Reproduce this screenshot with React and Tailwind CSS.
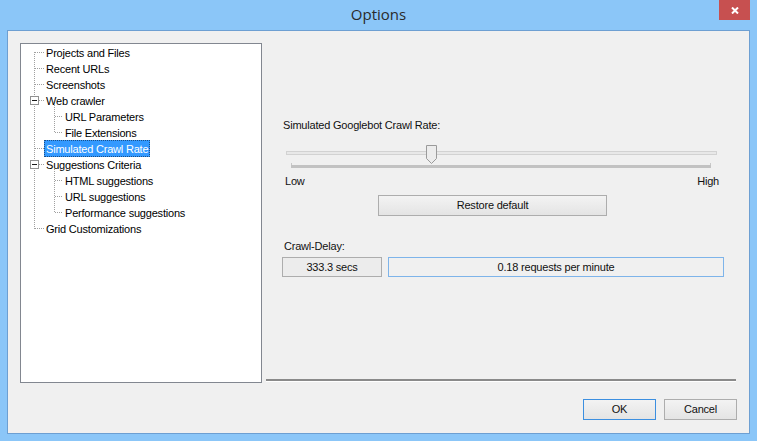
const treeItems = [
  { label: "Projects and Files", level: 0 },
  { label: "Recent URLs", level: 0 },
  { label: "Screenshots", level: 0 },
  { label: "Web crawler", level: 0 },
  { label: "URL Parameters", level: 1 },
  { label: "File Extensions", level: 1 },
  { label: "Simulated Crawl Rate", level: 0, selected: true },
  { label: "Suggestions Criteria", level: 0 },
  { label: "HTML suggestions", level: 1 },
  { label: "URL suggestions", level: 1 },
  { label: "Performance suggestions", level: 1 },
  { label: "Grid Customizations", level: 0 },
];

const mid = (i) => 8 + 16 * i;

function TreeLines() {
  const dot = { stroke: "#a0a0a0", strokeDasharray: "1 1", shapeRendering: "crispEdges" };
  return (
    <svg className="absolute left-0 top-0 pointer-events-none" width="240" height="200">
      {/* level 0 trunk */}
      <line x1="13.5" y1={mid(0)} x2="13.5" y2={mid(11) + 1} style={dot} />
      {treeItems.map((it, i) =>
        it.level === 0 ? (
          <line key={i} x1="14" y1={mid(i) + 0.5} x2="23" y2={mid(i) + 0.5} style={dot} />
        ) : (
          <line key={i} x1="34" y1={mid(i) + 0.5} x2="42" y2={mid(i) + 0.5} style={dot} />
        )
      )}
      {/* level 1 branches */}
      <line x1="33.5" y1={mid(3) + 5} x2="33.5" y2={mid(5) + 1} style={dot} />
      <line x1="33.5" y1={mid(7) + 5} x2="33.5" y2={mid(10) + 1} style={dot} />
      {/* expand boxes */}
      {[3, 7].map((i) => (
        <g key={i} shapeRendering="crispEdges">
          <rect x="9.5" y={mid(i) - 3.5} width="8" height="8" fill="#fff" stroke="#919191" />
          <line x1="11" y1={mid(i) + 0.5} x2="16" y2={mid(i) + 0.5} stroke="#1a1a1a" />
        </g>
      ))}
    </svg>
  );
}

function Btn({ children, className = "" }) {
  return (
    <div
      className={`flex items-center justify-center h-[21px] border bg-linear-to-b from-[#f3f3f3] to-[#e4e4e4] text-[11px] text-[#111] ${className}`}
    >
      {children}
    </div>
  );
}

export default function App() {
  return (
    <div className="w-[757px] h-[441px] bg-[#8bc6f8] flex flex-col font-['Liberation_Sans',Arial,sans-serif] tracking-[-0.2px] text-[#111] overflow-hidden">
      {/* Title bar */}
      <div className="h-[30px] grid grid-cols-[1fr_auto_1fr] shrink-0">
        <div />
        <div className="flex items-center text-[15px] text-[#2a2a2a] font-['Open_Sans',sans-serif] tracking-normal pb-[1px]">
          Options
        </div>
        <div className="flex justify-end pr-[7px]">
          <div className="w-[31px] h-[20px] bg-[#c75050] flex items-center justify-center">
            <svg width="8" height="7" viewBox="0 0 8 7">
              <path d="M1 0.5 L7 6.5 M7 0.5 L1 6.5" stroke="#fff" strokeWidth="2" />
            </svg>
          </div>
        </div>
      </div>

      {/* Client area */}
      <div className="flex-1 mx-[7px] mb-[7px] bg-[#f0f0f0] border border-[#6d9fd2] flex flex-col">
        <div className="flex pl-[12px] pt-[12px]">
          {/* Tree */}
          <div className="w-[242px] h-[340px] bg-white border border-[#828790] relative">
            <TreeLines />
            <div className="flex flex-col text-[11px] leading-[16px] pt-[1px] text-black">
              {treeItems.map((it, i) => (
                <div
                  key={i}
                  className={`h-[16px] flex ${it.level === 0 ? "pl-[23px]" : "pl-[42px]"}`}
                >
                  {it.selected ? (
                    <span className="bg-[#3399ff] text-white px-[1px] h-[17px] -mt-[1px] leading-[17px] border border-dotted border-[#1d4f85]">
                      {it.label}
                    </span>
                  ) : (
                    <span className="px-[2px]">{it.label}</span>
                  )}
                </div>
              ))}
            </div>
          </div>

          {/* Right panel */}
          <div className="ml-[4px] w-[470px] h-[339px] flex flex-col text-[11px]">
            <div className="mt-[75px] ml-[17px] h-[14px] leading-[14px]">
              Simulated Googlebot Crawl Rate:
            </div>
            <svg className="mt-[11px] ml-[17px]" width="440" height="27" shapeRendering="crispEdges">
              <rect x="3.5" y="8.5" width="430" height="3" fill="#e8e8e8" stroke="#d2d2d2" />
              <rect x="8" y="22" width="420" height="3" fill="#c2c2c2" />
              <rect x="8" y="20" width="1" height="2" fill="#c8c8c8" />
              <rect x="427" y="20" width="1" height="2" fill="#c8c8c8" />
              <path
                d="M143.5 2.5 H153.5 V15.5 L148.5 20.5 L143.5 15.5 Z"
                fill="#ececec"
                stroke="#9a9a9a"
                shapeRendering="auto"
              />
            </svg>
            <div className="mt-[4px] ml-[19px] mr-[17px] h-[14px] leading-[14px] flex justify-between">
              <span>Low</span>
              <span>High</span>
            </div>
            <Btn className="mt-[7px] ml-[112px] w-[229px] border-[#adadad]">Restore default</Btn>
            <div className="mt-[23px] ml-[18px] h-[14px] leading-[14px]">Crawl-Delay:</div>
            <div className="mt-[4px] ml-[16px] flex gap-[6px]">
              <div className="w-[100px] h-[20px] border border-[#adadad] bg-[#ececec] flex items-center justify-center">
                333.3 secs
              </div>
              <div className="w-[336px] h-[20px] border border-[#7eb4ea] bg-[#f0f0f0] flex items-center justify-center">
                0.18 requests per minute
              </div>
            </div>
            <div className="mt-auto h-[3px] border-t-2 border-[#8a8a8a] bg-white" />
          </div>
        </div>

        {/* Buttons */}
        <div className="mt-[16px] flex justify-end pr-[12px] gap-[8px]">
          <Btn className="w-[73px] border-[#3c8fe0]">OK</Btn>
          <Btn className="w-[73px] border-[#adadad]">Cancel</Btn>
        </div>
      </div>
    </div>
  );
}
